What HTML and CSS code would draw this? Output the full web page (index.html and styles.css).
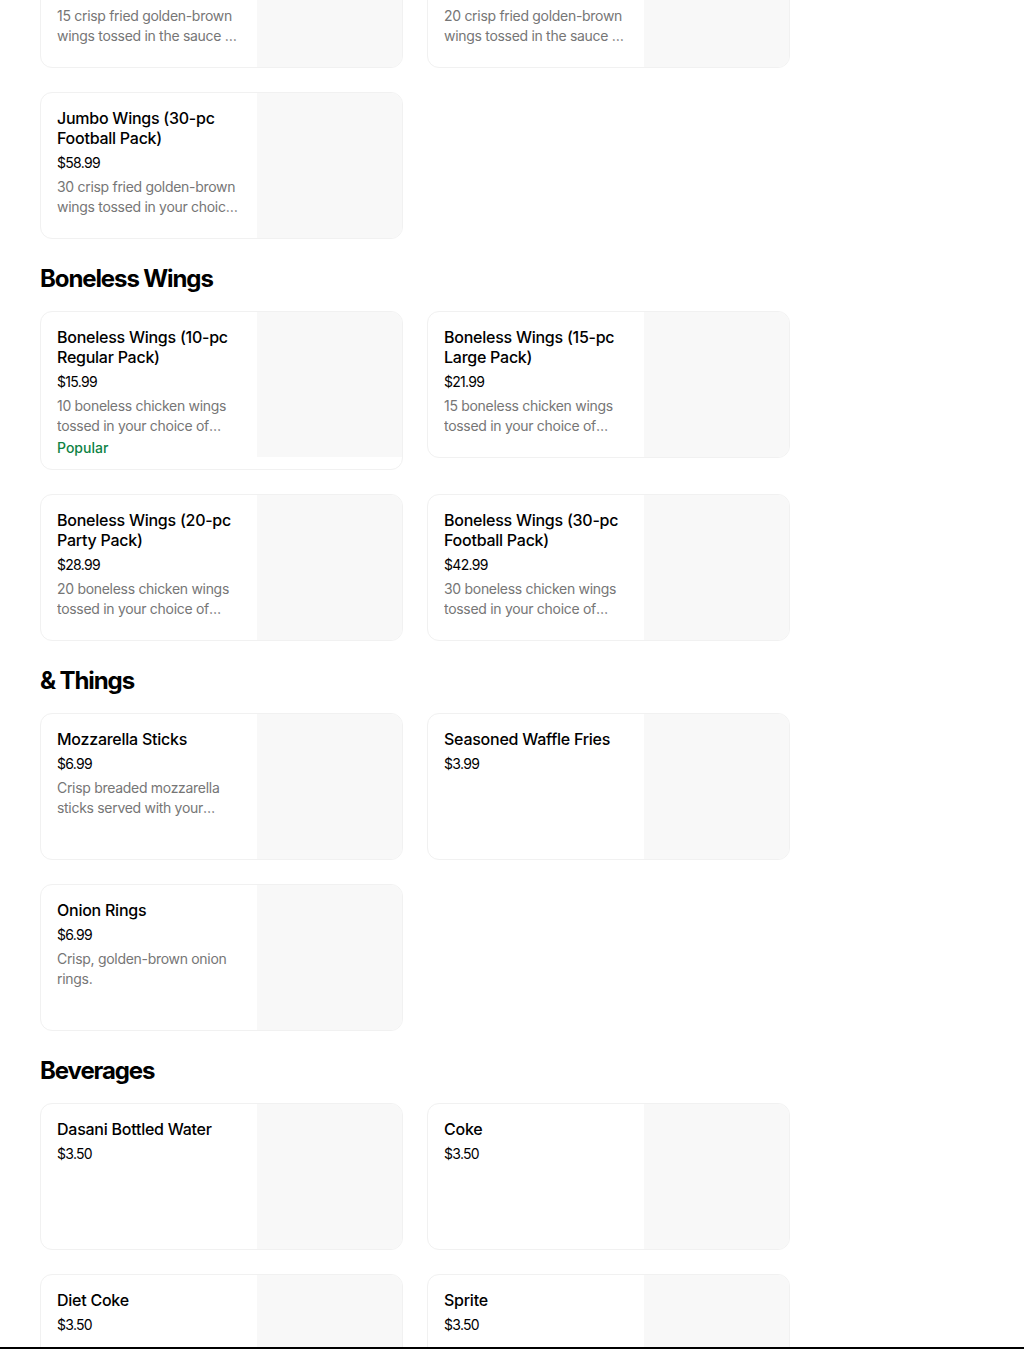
FILE: index.html
```html
<!DOCTYPE html>
<html>
<head>
<meta charset="utf-8">
<link rel="stylesheet" href="styles.css">
</head>
<body>
<main class="menu">
  <section class="section section-first">
    <div class="grid">
      <div class="card">
        <div class="info">
          <div class="title">Jumbo Wings (15-pc Large Pack)</div>
          <div class="price">$30.99</div>
          <div class="desc">15 crisp fried golden-brown wings tossed in the sauce of your choice.</div>
        </div>
        <div class="img"></div>
      </div>
      <div class="card">
        <div class="info">
          <div class="title">Jumbo Wings (20-pc Party Pack)</div>
          <div class="price">$39.99</div>
          <div class="desc">20 crisp fried golden-brown wings tossed in the sauce of your choice.</div>
        </div>
        <div class="img"></div>
      </div>
      <div class="card">
        <div class="info">
          <div class="title">Jumbo Wings (30-pc Football Pack)</div>
          <div class="price">$58.99</div>
          <div class="desc">30 crisp fried golden-brown wings tossed in your choice of sauce.</div>
        </div>
        <div class="img"></div>
      </div>
    </div>
  </section>

  <section class="section">
    <h2 class="heading">Boneless Wings</h2>
    <div class="grid">
      <div class="card">
        <div class="info">
          <div class="title">Boneless Wings (10-pc Regular Pack)</div>
          <div class="price">$15.99</div>
          <div class="desc">10 boneless chicken wings tossed in your choice of sauce.</div>
          <div class="popular">Popular</div>
        </div>
        <div class="img"></div>
      </div>
      <div class="card">
        <div class="info">
          <div class="title">Boneless Wings (15-pc Large Pack)</div>
          <div class="price">$21.99</div>
          <div class="desc">15 boneless chicken wings tossed in your choice of sauce.</div>
        </div>
        <div class="img"></div>
      </div>
      <div class="card">
        <div class="info">
          <div class="title">Boneless Wings (20-pc Party Pack)</div>
          <div class="price">$28.99</div>
          <div class="desc">20 boneless chicken wings tossed in your choice of sauce.</div>
        </div>
        <div class="img"></div>
      </div>
      <div class="card">
        <div class="info">
          <div class="title">Boneless Wings (30-pc Football Pack)</div>
          <div class="price">$42.99</div>
          <div class="desc">30 boneless chicken wings tossed in your choice of sauce.</div>
        </div>
        <div class="img"></div>
      </div>
    </div>
  </section>

  <section class="section">
    <h2 class="heading">&amp; Things</h2>
    <div class="grid">
      <div class="card">
        <div class="info">
          <div class="title">Mozzarella Sticks</div>
          <div class="price">$6.99</div>
          <div class="desc">Crisp breaded mozzarella sticks served with your choice of dipping sauce.</div>
        </div>
        <div class="img"></div>
      </div>
      <div class="card">
        <div class="info">
          <div class="title">Seasoned Waffle Fries</div>
          <div class="price">$3.99</div>
        </div>
        <div class="img"></div>
      </div>
      <div class="card">
        <div class="info">
          <div class="title">Onion Rings</div>
          <div class="price">$6.99</div>
          <div class="desc">Crisp, golden-brown onion rings.</div>
        </div>
        <div class="img"></div>
      </div>
    </div>
  </section>

  <section class="section">
    <h2 class="heading">Beverages</h2>
    <div class="grid">
      <div class="card">
        <div class="info">
          <div class="title">Dasani Bottled Water</div>
          <div class="price">$3.50</div>
        </div>
        <div class="img"></div>
      </div>
      <div class="card">
        <div class="info">
          <div class="title">Coke</div>
          <div class="price">$3.50</div>
        </div>
        <div class="img"></div>
      </div>
      <div class="card">
        <div class="info">
          <div class="title">Diet Coke</div>
          <div class="price">$3.50</div>
        </div>
        <div class="img"></div>
      </div>
      <div class="card">
        <div class="info">
          <div class="title">Sprite</div>
          <div class="price">$3.50</div>
        </div>
        <div class="img"></div>
      </div>
    </div>
  </section>
</main>
<div class="bottom-bar"></div>
</body>
</html>
```

FILE: styles.css
```css
html, body {
  margin: 0;
  padding: 0;
  background: #ffffff;
}

body {
  font-family: Inter, "Liberation Sans", Arial, sans-serif;
  color: #000000;
  overflow: hidden;
  height: 1349px;
}

.menu {
  width: 750px;
  padding-left: 40px;
  margin-top: -79px;
}

.section {
  margin-top: 24px;
}

.section-first {
  margin-top: 0;
}

.heading {
  margin: 0 0 16px 0;
  font-size: 24px;
  line-height: 32px;
  font-weight: 700;
  letter-spacing: -1.1px;
}

.grid {
  display: grid;
  grid-template-columns: 363px 363px;
  column-gap: 24px;
  row-gap: 24px;
  align-items: start;
}

.card {
  display: flex;
  align-items: flex-start;
  border: 1px solid #f1f1f1;
  border-radius: 12px;
  overflow: hidden;
  background: #ffffff;
  min-height: 145px;
}

.info {
  width: 184px;
  padding: 15px 16px 11px 16px;
  flex: none;
}

.img {
  width: 145px;
  height: 145px;
  flex: none;
  background: #f8f8f8;
}

.title {
  font-size: 16px;
  line-height: 20px;
  font-weight: 500;
  letter-spacing: -0.25px;
}

.price {
  margin-top: 5px;
  font-size: 14px;
  line-height: 20px;
  font-weight: 400;
  letter-spacing: -0.7px;
}

.desc {
  margin-top: 4px;
  font-size: 14px;
  line-height: 20px;
  color: #767676;
  letter-spacing: -0.3px;
  display: -webkit-box;
  -webkit-line-clamp: 2;
  -webkit-box-orient: vertical;
  overflow: hidden;
}

.popular {
  margin-top: 2px;
  font-size: 14px;
  line-height: 20px;
  font-weight: 500;
  color: #0e8345;
}

.bottom-bar {
  position: fixed;
  left: 0;
  right: 0;
  bottom: 0;
  height: 2px;
  background: #000000;
}
```
